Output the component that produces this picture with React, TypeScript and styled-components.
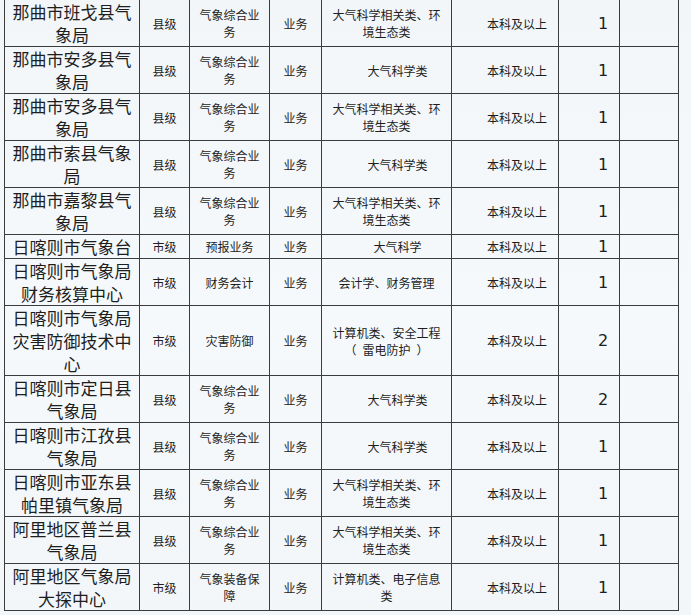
import React from "react";
import styled, { createGlobalStyle } from "styled-components";

const Global = createGlobalStyle`
  html, body {
    margin: 0;
    padding: 0;
    background: #f3f7fa;
    overflow: hidden;
  }
  body {
    font-family: "Noto Sans CJK SC", "Noto Sans", sans-serif;
    color: #1e1e1e;
  }
`;

const Page = styled.div`
  display: flex;
  flex-direction: column;
  margin-top: -1px;
  background: linear-gradient(180deg, #f2f6f9 0%, #f5f9fb 50%, #f2f6f9 100%);
`;

const TableWrap = styled.div`
  padding-left: 4px;
`;

const Table = styled.table`
  border-collapse: collapse;
  table-layout: fixed;
  width: 675px;
`;

const Col = styled.col<{ $w: number }>`
  width: ${(p) => p.$w}px;
`;

const Cell = styled.td<{ $kind?: "lg" | "sm" | "num"; $shift?: number; $pad?: number }>`
  border: 1px solid #3c3c3c;
  text-align: center;
  vertical-align: middle;
  padding: 0 ${(p) => p.$pad ?? 4}px 0
    ${(p) => (p.$pad ?? 4) + (p.$shift ?? 0)}px;
  font-size: ${(p) => (p.$kind === "lg" ? 17 : p.$kind === "num" ? 16 : 12)}px;
  line-height: ${(p) => (p.$kind === "sm" ? "17px" : "23px")};
  font-family: ${(p) =>
    p.$kind === "num"
      ? '"DejaVu Sans", sans-serif'
      : '"Noto Sans CJK SC", sans-serif'};
  color: #1e1e1e;
  word-break: break-all;
`;

const Note = styled.div`
  font-size: 17px;
  line-height: 23px;
  margin-top: 1px;
  color: #1e1e1e;
`;

type Row = {
  unit: string;
  level: string;
  post: string;
  kind: string;
  major: string[];
  single?: boolean;
  count: string;
};

const rows: Row[] = [
  { unit: "那曲市班戈县气象局", level: "县级", post: "气象综合业务", kind: "业务", major: ["大气科学相关类、环境生态类"], count: "1" },
  { unit: "那曲市安多县气象局", level: "县级", post: "气象综合业务", kind: "业务", major: ["大气科学类"], single: true, count: "1" },
  { unit: "那曲市安多县气象局", level: "县级", post: "气象综合业务", kind: "业务", major: ["大气科学相关类、环境生态类"], count: "1" },
  { unit: "那曲市索县气象局", level: "县级", post: "气象综合业务", kind: "业务", major: ["大气科学类"], single: true, count: "1" },
  { unit: "那曲市嘉黎县气象局", level: "县级", post: "气象综合业务", kind: "业务", major: ["大气科学相关类、环境生态类"], count: "1" },
  { unit: "日喀则市气象台", level: "市级", post: "预报业务", kind: "业务", major: ["大气科学"], single: true, count: "1" },
  { unit: "日喀则市气象局财务核算中心", level: "市级", post: "财务会计", kind: "业务", major: ["会计学、财务管理"], count: "1" },
  { unit: "日喀则市气象局灾害防御技术中心", level: "市级", post: "灾害防御", kind: "业务", major: ["计算机类、安全工程", "（\u2002雷电防护\u2002）"], count: "2" },
  { unit: "日喀则市定日县气象局", level: "县级", post: "气象综合业务", kind: "业务", major: ["大气科学类"], single: true, count: "2" },
  { unit: "日喀则市江孜县气象局", level: "县级", post: "气象综合业务", kind: "业务", major: ["大气科学类"], single: true, count: "1" },
  { unit: "日喀则市亚东县帕里镇气象局", level: "县级", post: "气象综合业务", kind: "业务", major: ["大气科学相关类、环境生态类"], count: "1" },
  { unit: "阿里地区普兰县气象局", level: "县级", post: "气象综合业务", kind: "业务", major: ["大气科学相关类、环境生态类"], count: "1" },
  { unit: "阿里地区气象局大探中心", level: "市级", post: "气象装备保障", kind: "业务", major: ["计算机类、电子信息类"], count: "1" },
];

const widths = [135, 50, 80, 52, 130, 107, 61, 59];

export default function App() {
  return (
    <>
      <Global />
      <Page lang="zh-CN">
        <TableWrap>
          <Table>
            <colgroup>
              {widths.map((w, i) => (
                <Col key={i} $w={w} />
              ))}
            </colgroup>
            <tbody>
              {rows.map((r, i) => (
                <tr key={i}>
                  <Cell $kind="lg" $pad={4}>{r.unit}</Cell>
                  <Cell $kind="sm" $pad={2}>{r.level}</Cell>
                  <Cell $kind="sm" $pad={6}>{r.post}</Cell>
                  <Cell $kind="sm" $pad={2}>{r.kind}</Cell>
                  <Cell $kind="sm" $pad={8} $shift={r.single ? 22 : 0}>
                    {r.major.map((line, j) => (
                      <React.Fragment key={j}>
                        {j > 0 && <br />}
                        {line}
                      </React.Fragment>
                    ))}
                  </Cell>
                  <Cell $kind="sm" $pad={2} $shift={24}>本科及以上</Cell>
                  <Cell $kind="num" $pad={0} $shift={28}>{r.count}</Cell>
                  <Cell $kind="sm" />
                </tr>
              ))}
            </tbody>
          </Table>
        </TableWrap>
        <Note>备注：</Note>
      </Page>
    </>
  );
}
